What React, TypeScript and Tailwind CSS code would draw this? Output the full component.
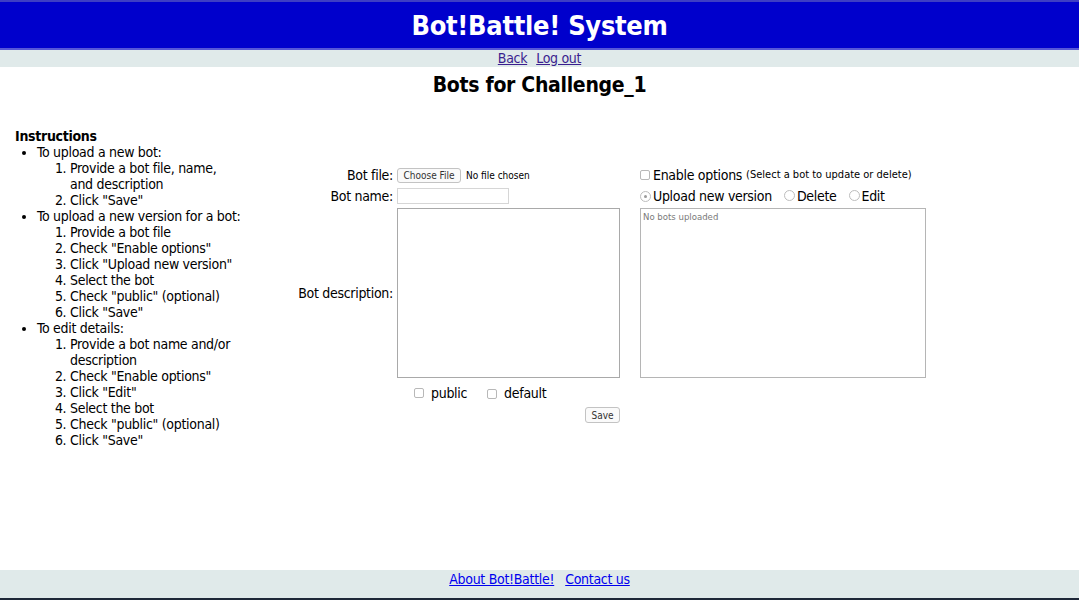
import React from 'react'

const font = "font-['DejaVu_Sans_Condensed','DejaVu_Sans',sans-serif]"

function Box() {
  return <span className="inline-block w-[10px] h-[10px] rounded-[2px] border border-[#b8b8b8] bg-white align-middle" />
}

function Radio({ checked = false }: { checked?: boolean }) {
  return (
    <span className="inline-flex w-[11px] h-[11px] rounded-full border border-[#bdbdbd] bg-white items-center justify-center">
      {checked && <span className="w-[3px] h-[3px] rounded-full bg-[#9a9a9a]" />}
    </span>
  )
}

export default function App() {
  return (
    <div className={`min-h-[600px] flex flex-col bg-white text-black tracking-[-0.3px] ${font}`}>
      {/* Banner */}
      <header className="h-[50px] bg-[#0000cc] border-t-2 border-t-[#3e3ec4] border-b-2 border-b-[#5656d8] flex items-center justify-center">
        <h1 className="text-white font-bold text-[27px] leading-none tracking-[-0.3px]">Bot!Battle! System</h1>
      </header>

      {/* Nav */}
      <nav className="h-[17px] bg-[#e0eaea] flex justify-center gap-[9px] text-[14px] leading-[17px]">
        <a href="#" className="underline text-[#3b1f8f]">Back</a>
        <a href="#" className="underline text-[#3b1f8f]">Log out</a>
      </nav>

      <main className="flex-1">
        <h2 className="text-center font-bold text-[21px] leading-[26px] mt-[5px]">Bots for Challenge_1</h2>

        <div className="flex items-start mt-[30px]">
          {/* Instructions */}
          <div className="w-[290px] pl-[15px] text-[14px] leading-[16px] shrink-0">
            <div className="font-bold">Instructions</div>
            <ul className="list-disc pl-[22px]">
              <li>
                To upload a new bot:
                <ol className="list-decimal pl-[33px]">
                  <li>Provide a bot file, name,<br />and description</li>
                  <li>Click "Save"</li>
                </ol>
              </li>
              <li>
                To upload a new version for a bot:
                <ol className="list-decimal pl-[33px]">
                  <li>Provide a bot file</li>
                  <li>Check "Enable options"</li>
                  <li>Click "Upload new version"</li>
                  <li>Select the bot</li>
                  <li>Check "public" (optional)</li>
                  <li>Click "Save"</li>
                </ol>
              </li>
              <li>
                To edit details:
                <ol className="list-decimal pl-[33px]">
                  <li>Provide a bot name and/or<br />description</li>
                  <li>Check "Enable options"</li>
                  <li>Click "Edit"</li>
                  <li>Select the bot</li>
                  <li>Check "public" (optional)</li>
                  <li>Click "Save"</li>
                </ol>
              </li>
            </ul>
          </div>

          {/* Form */}
          <div className="mt-[40px] grid grid-cols-[107px_243px_286px] text-[14px] whitespace-nowrap">
            {/* row 1 */}
            <div className="h-[14px] flex items-center justify-end pr-[4px]">Bot file:</div>
            <div className="h-[14px] flex items-center">
              <span className="inline-flex items-center justify-center w-[64px] h-[15px] rounded-[3px] border border-[#c3c3c3] bg-[#fafafa] text-[10px] tracking-normal text-[#333]">Choose File</span>
              <span className="ml-[5px] text-[10px] tracking-normal">No file chosen</span>
            </div>
            <div className="h-[14px] flex items-center">
              <Box />
              <span className="ml-[3px]">Enable options</span>
              <span className="ml-[4px] text-[11px] tracking-normal">(Select a bot to update or delete)</span>
            </div>

            {/* row 2 */}
            <div className="mt-[6px] h-[16px] flex items-center justify-end pr-[4px]">Bot name:</div>
            <div className="mt-[6px]">
              <div className="w-[112px] h-[16px] border border-[#d6d6d6] bg-white" />
            </div>
            <div className="mt-[6px] h-[16px] flex items-center">
              <Radio checked />
              <span className="ml-[2px]">Upload new version</span>
              <span className="ml-[12px]"><Radio /></span>
              <span className="ml-[2px]">Delete</span>
              <span className="ml-[12px]"><Radio /></span>
              <span className="ml-[2px]">Edit</span>
            </div>

            {/* row 3 */}
            <div className="mt-[4px] h-[170px] flex items-center justify-end pr-[4px]">Bot description:</div>
            <div className="mt-[4px]">
              <div className="w-[223px] h-[170px] border border-[#a9a9a9] bg-white" />
            </div>
            <div className="mt-[4px]">
              <div className="w-[286px] h-[170px] border border-[#b5b5b5] bg-white px-[2px] pt-[1px] text-[9.5px] tracking-normal text-[#7a7a7a]">No bots uploaded</div>
            </div>

            {/* row 4 */}
            <div />
            <div className="mt-[7px] h-[16px] flex items-center pl-[17px]">
              <Box />
              <span className="ml-[7px]">public</span>
              <span className="ml-[20px]"><Box /></span>
              <span className="ml-[7px]">default</span>
            </div>
            <div />

            {/* row 5 */}
            <div />
            <div className="mt-[6px]">
              <div className="w-[223px] flex justify-end">
                <span className="inline-flex items-center justify-center w-[35px] h-[16px] rounded-[3px] border border-[#c3c3c3] bg-[#fafafa] text-[10px] tracking-normal text-[#333]">Save</span>
              </div>
            </div>
            <div />
          </div>
        </div>
      </main>

      {/* Footer */}
      <footer className="h-[30px] bg-[#e0eaea] border-b-2 border-b-[#1e2838] flex justify-center gap-[11px] text-[14px] leading-[17px] pt-[1px]">
        <a href="#" className="underline text-[#0000ee]">About Bot!Battle!</a>
        <a href="#" className="underline text-[#0000ee]">Contact us</a>
      </footer>
    </div>
  )
}
